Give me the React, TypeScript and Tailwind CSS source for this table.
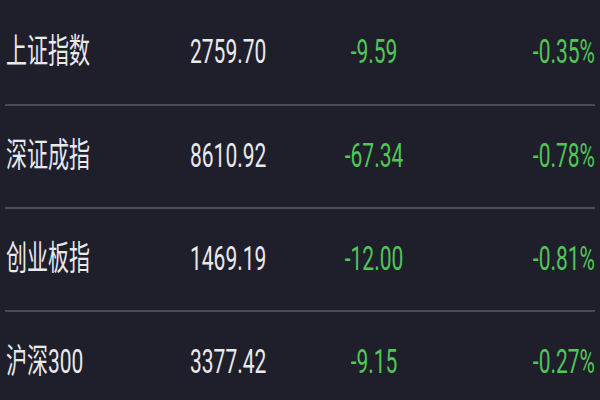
const rows = [
  { name: '上证指数', price: '2759.70', change: '-9.59', pct: '-0.35%' },
  { name: '深证成指', price: '8610.92', change: '-67.34', pct: '-0.78%' },
  { name: '创业板指', price: '1469.19', change: '-12.00', pct: '-0.81%' },
  { name: '沪深300', price: '3377.42', change: '-9.15', pct: '-0.27%' },
];

const Row = ({ name, price, change, pct, first }: { name: string; price: string; change: string; pct: string; first?: boolean }) => (
  <div className={`flex items-center pl-[6px] pr-[5px] ${first ? 'h-[104px]' : 'h-[101px]'} text-[21px] leading-none`}>
    <span className="w-[184px] text-[#e9e9ec] scale-y-[1.6]">{name}</span>
    <span className="w-[100px] text-[#e9e9ec] scale-y-[1.6]">{price}</span>
    <span className="w-[168px] text-center text-[#50c656] scale-y-[1.6]">{change}</span>
    <span className="flex-1 text-right text-[#50c656] scale-y-[1.6]">{pct}</span>
  </div>
);

export default function App() {
  return (
    <div className="h-[400px] w-[600px] overflow-hidden bg-[#1f1f2b] font-['Roboto','Noto_Sans_CJK_SC',sans-serif]">
      {rows.map((r, i) => (
        <div key={r.name}>
          {i > 0 && <div className="mx-[5px] h-[2px] bg-[#4a4b58]" />}
          <Row {...r} first={i === 0} />
        </div>
      ))}
    </div>
  );
}
